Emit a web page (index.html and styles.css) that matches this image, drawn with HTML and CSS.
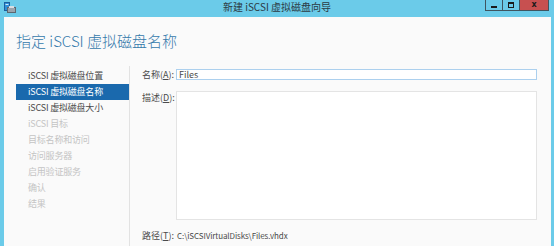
FILE: index.html
```html
<!DOCTYPE html>
<html lang="zh-CN">
<head>
    <meta charset="UTF-8">
    <title>新建 iSCSI 虚拟磁盘向导</title>
    <link rel="stylesheet" href="styles.css">
</head>
<body>
    <div class="window">
        <div class="titlebar">
            <div class="app-icon">
                <svg width="12" height="11" viewBox="0 0 12 11">
                    <rect x="0.5" y="0.5" width="5" height="8" fill="#2f8fd8" stroke="#1c5f9c"/>
                    <rect x="1.5" y="2" width="3" height="1" fill="#cfe8fb"/>
                    <rect x="3.5" y="5.5" width="8" height="5" fill="#9aa4ad" stroke="#5d6770"/>
                    <rect x="5" y="4" width="5" height="2" fill="#d9dee2"/>
                </svg>
            </div>
            <div class="title">新建 iSCSI 虚拟磁盘向导</div>
            <div class="win-buttons">
                <span class="btn btn-min"><i></i></span>
                <span class="btn btn-max"><i></i></span>
                <span class="btn btn-close">x</span>
            </div>
        </div>

        <div class="content">
            <h1 class="page-title">指定 iSCSI 虚拟磁盘名称</h1>

            <div class="main">
                <ul class="steps">
                    <li>iSCSI 虚拟磁盘位置</li>
                    <li class="active">iSCSI 虚拟磁盘名称</li>
                    <li>iSCSI 虚拟磁盘大小</li>
                    <li class="disabled">iSCSI 目标</li>
                    <li class="disabled">目标名称和访问</li>
                    <li class="disabled">访问服务器</li>
                    <li class="disabled">启用验证服务</li>
                    <li class="disabled">确认</li>
                    <li class="disabled">结果</li>
                </ul>

                <div class="form">
                    <label class="field-label" for="disk-name">名称(<u>A</u>):</label>
                    <div class="name-box" id="disk-name">Files</div>

                    <label class="field-label desc-label" for="disk-desc">描述(<u>D</u>):</label>
                    <div class="desc-box" id="disk-desc"></div>

                    <span class="field-label path-label">路径(<u>T</u>):</span>
                    <span class="path-value">C:\iSCSIVirtualDisks\Files.vhdx</span>
                </div>
            </div>
        </div>
    </div>
</body>
</html>
```

FILE: styles.css
```css
:root {
    --frame: #6bcbe9;
    --surface: #fafafa;
    --text: #4a4a4a;
    --muted: #c4c4c4;
    --accent: #1a69ad;
    --heading: #3479ab;
}

body {
    margin: 0;
    font-family: "Noto Sans CJK SC", sans-serif;
    font-size: 9px;
    color: var(--text);
    background: var(--frame);
}

.window {
    width: 554px;
    height: 246px;
    box-sizing: border-box;
    border-left: 4px solid var(--frame);
    border-right: 3px solid var(--frame);
    display: flex;
    flex-direction: column;
    overflow: hidden;
}

.titlebar {
    height: 17px;
    flex: none;
    display: grid;
    grid-template-columns: 1fr auto 1fr;
    align-items: start;
    margin: 0 -3px 0 -4px;
    background: var(--frame);
}

.app-icon {
    padding: 2px 0 0 4px;
    height: 11px;
}

.title {
    font-size: 10px;
    line-height: 14px;
    color: #2b3a44;
}

.win-buttons {
    justify-self: end;
    display: flex;
    margin-right: 5px;
}

.btn {
    height: 11px;
    box-sizing: border-box;
    border: 1px solid #3f5560;
    border-top: none;
    display: flex;
    align-items: center;
    justify-content: center;
}

.btn + .btn {
    border-left: none;
}

.btn-min {
    width: 18px;
}

.btn-min i {
    width: 6px;
    height: 2px;
    margin-top: 3px;
    background: #1b1b1b;
}

.btn-max {
    width: 17px;
}

.btn-max i {
    width: 4px;
    height: 3px;
    border: 1px solid #1b1b1b;
    border-top-width: 2px;
}

.btn-close {
    width: 29px;
    background: #c75050;
    color: #1b1b1b;
    font-family: "DejaVu Sans", sans-serif;
    font-weight: bold;
    font-size: 8px;
    line-height: 8px;
}

.content {
    flex: 1;
    background: var(--surface);
    display: flex;
    flex-direction: column;
}

.page-title {
    margin: 0;
    height: 49px;
    box-sizing: border-box;
    padding: 14px 0 0 12px;
    font-size: 15px;
    font-weight: 300;
    line-height: 20px;
    color: var(--heading);
}

.main {
    flex: 1;
    display: flex;
}

.steps {
    list-style: none;
    margin: 0;
    width: 113px;
    padding: 2px 0 0 12px;
    border-right: 1px solid #e2e2e2;
}

.steps li {
    height: 16px;
    line-height: 16px;
    padding-left: 12px;
    white-space: nowrap;
    letter-spacing: -0.2px;
}

.steps li.active {
    background: var(--accent);
    color: #ffffff;
}

.steps li.disabled {
    color: var(--muted);
}

.form {
    flex: 1;
    display: grid;
    grid-template-columns: 34px 1fr;
    grid-template-rows: 11px 129px 12px;
    row-gap: 11px;
    align-content: start;
    padding: 3px 14px 0 12px;
}

.field-label {
    line-height: 11px;
    white-space: nowrap;
}

.desc-label {
    padding-top: 1px;
}

.path-label {
    margin-top: -1px;
}

.name-box {
    border: 1px solid #acd0ee;
    background: #ffffff;
    line-height: 9px;
    padding-left: 2px;
}

.desc-box {
    border: 1px solid #e4e4e4;
    background: #ffffff;
}

.path-value {
    margin-top: -1px;
    line-height: 11px;
    padding-left: 1px;
    font-size: 8px;
    letter-spacing: -0.1px;
}
```
